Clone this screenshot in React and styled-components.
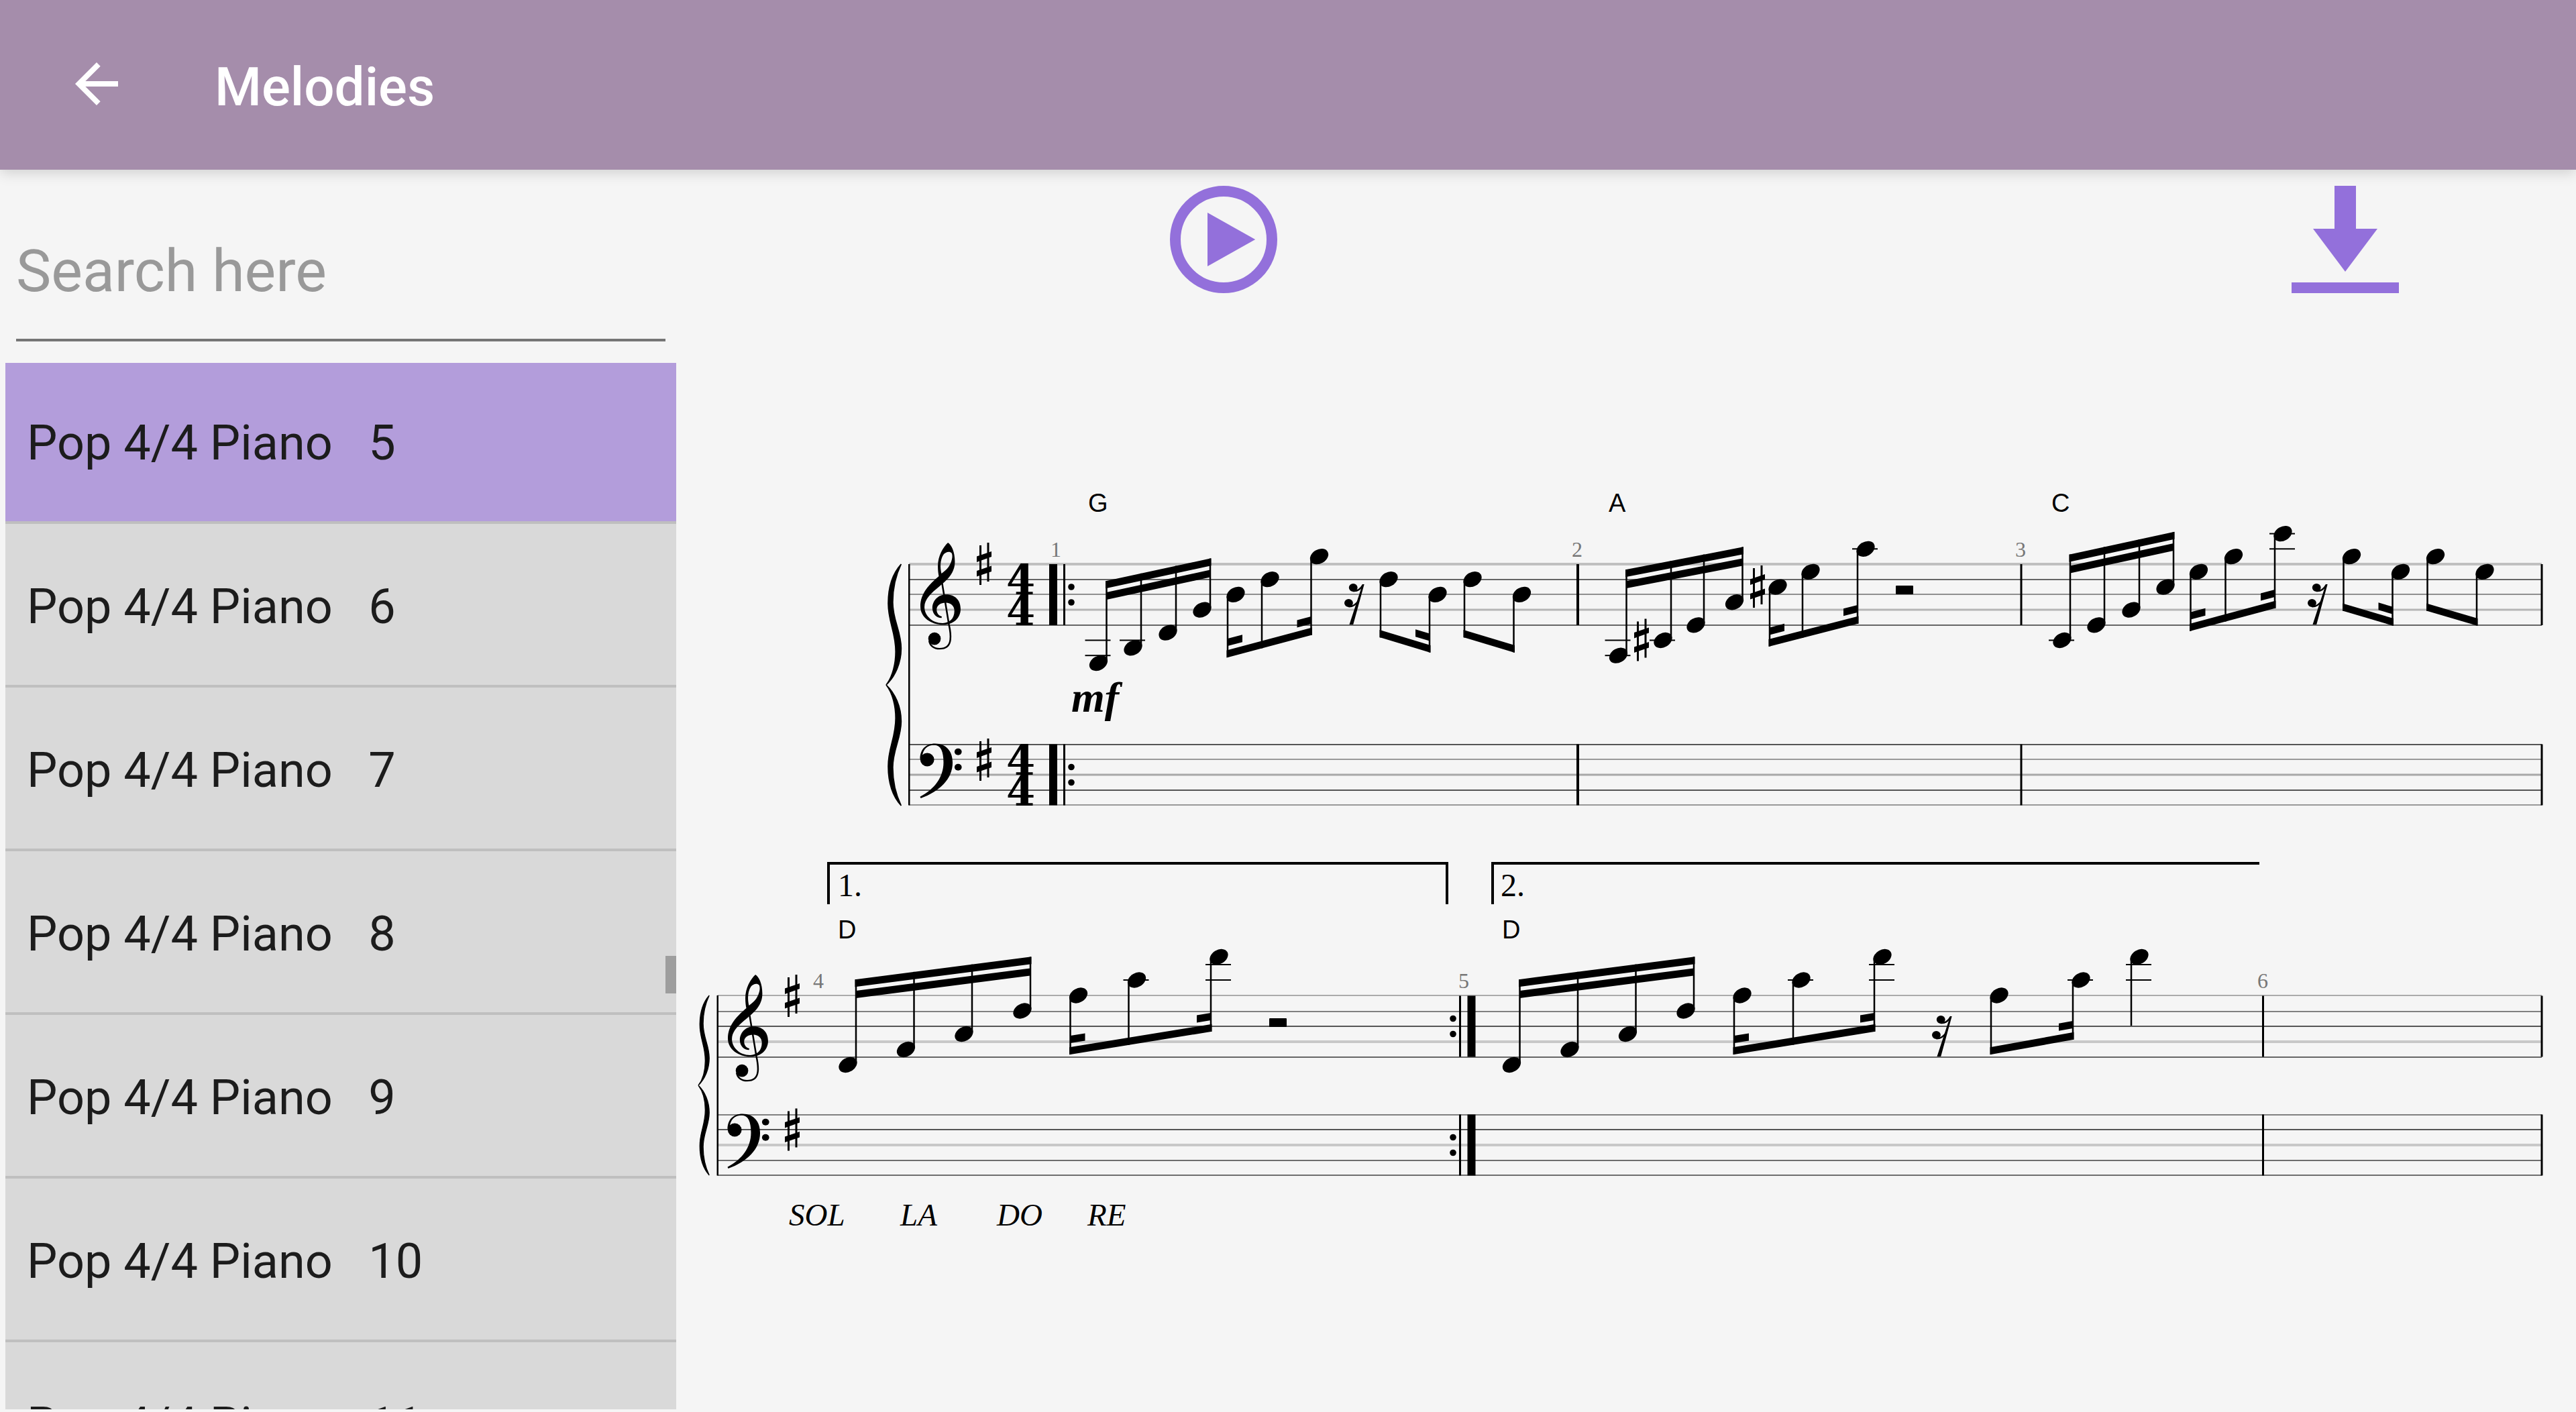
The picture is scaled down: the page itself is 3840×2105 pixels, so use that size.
import React, { useState } from "react";
import styled, { createGlobalStyle } from "styled-components";

const MELODIES = [5, 6, 7, 8, 9, 10, 11];

const TREBLE = 0;
const BASS = 1;

// beam: y of the outer edge at the first and the last stem
// stubs: short second beams, "start" after the first stem, "end" before the last
const SYSTEMS = [
  {
    left: 1355,
    right: 3789,
    top: 841,
    step: 11.35,
    brace: { x: 1321, width: 22, height: 360 },
    lines: [
      [841, 4, "#c0c0c0"],
      [864, 2, "#666"],
      [886, 2, "#8f8f8f"],
      [909, 3, "#b5b5b5"],
      [932, 2, "#666"],
      [1110, 2, "#555"],
      [1132, 2, "#999"],
      [1155, 3, "#a8a8a8"],
      [1178, 2, "#555"],
      [1200, 2, "#999"],
    ],
    staves: [841, 1109.5],
    clefs: [
      [TREBLE, 1372, 809],
      [BASS, 1371.5, 1108.5],
    ],
    sharps: [
      [1456, 809],
      [1456, 1101],
      [2436, 922.5],
      [2609, 843],
    ],
    bars: [
      [1570, 12],
      [1586.5, 3],
      [2352, 4],
      [3013, 3],
      [3789, 3],
    ],
    dots: 1597,
    numbers: [
      [1, 1566],
      [2, 2343],
      [3, 3004],
    ],
    chords: [
      ["G", 1622],
      ["A", 2398],
      ["C", 3058],
    ],
    groups: [
      { up: true, beam: [866, 832.5], double: true, notes: [[1637.5, 13], [1689, 11], [1741, 9], [1792, 6]] },
      { beam: [980, 947], stubs: ["start", "end"], notes: [[1842, 4], [1893, 2], [1966.5, -1]] },
      { beam: [950.5, 972.5], stubs: ["end"], notes: [[2070, 2], [2143, 4]] },
      { beam: [950.5, 972.5], notes: [[2195, 2], [2268.5, 4]] },
      { up: true, beam: [849, 815.5], double: true, notes: [[2412.5, 12], [2479, 10], [2528, 8], [2585.5, 5]] },
      { beam: [963.5, 930], stubs: ["start", "end"], notes: [[2650, 3], [2699, 1], [2781, -2]] },
      { up: true, beam: [826.5, 793], double: true, notes: [[3074, 10], [3125, 8], [3177, 6], [3228, 3]] },
      { beam: [940.5, 907], stubs: ["start", "end"], notes: [[3277.5, 1], [3329.5, -1], [3403, -4]] },
      { beam: [911, 932.5], stubs: ["end"], notes: [[3505.5, -1], [3578.5, 1]] },
      { beam: [911, 932.5], notes: [[3630.5, -1], [3704, 1]] },
    ],
    halfRests: [[2826, 873]],
    sixteenthRests: [
      [2004, 870],
      [3440, 870],
    ],
  },
  {
    left: 1069.5,
    right: 3789,
    top: 1484,
    step: 11.5,
    brace: { x: 1041, width: 16, height: 268 },
    lines: [
      [1484, 2, "#aaa"],
      [1508, 2, "#808080"],
      [1530, 2, "#555"],
      [1553, 4, "#c8c8c8"],
      [1576, 2, "#666"],
      [1662, 2, "#808080"],
      [1684, 2, "#555"],
      [1707, 4, "#c8c8c8"],
      [1730, 2, "#6e6e6e"],
      [1752, 2, "#6e6e6e"],
    ],
    staves: [1484.5, 1661.5],
    clefs: [
      [TREBLE, 1085, 1453],
      [BASS, 1084.5, 1660.5],
    ],
    sharps: [
      [1170, 1453],
      [1170, 1652.5],
    ],
    bars: [
      [2176.5, 3],
      [2193.5, 12],
      [3373.5, 3],
      [3789, 3],
    ],
    dots: 2166,
    numbers: [
      [4, 1212],
      [5, 2174],
      [6, 3365],
    ],
    chords: [
      ["D", 1249],
      ["D", 2239],
    ],
    groups: [
      { up: true, beam: [1460, 1426.5], double: true, notes: [[1264, 9], [1350.5, 7], [1437, 5], [1524, 2]] },
      { beam: [1572, 1538], stubs: ["start", "end"], notes: [[1607.5, 0], [1694.5, -2], [1817, -5]] },
      { up: true, beam: [1460, 1426.5], double: true, notes: [[2253.5, 9], [2340, 7], [2426.5, 5], [2513, 2]] },
      { beam: [1572, 1538], stubs: ["start", "end"], notes: [[2597, 0], [2685, -2], [2806, -5]] },
      { beam: [1572, 1550], stubs: ["end"], notes: [[2980, 0], [3102, -2]] },
      { single: true, beam: [1529, 1529], notes: [[3189, -5]] },
    ],
    halfRests: [[1892, 1518]],
    sixteenthRests: [[2880, 1514]],
  },
];

const SYLLABLES = [
  ["SOL", 1176],
  ["LA", 1342],
  ["DO", 1486],
  ["RE", 1621],
];

function TrebleClef({ x, y }) {
  return (
    <g transform={`translate(${x} ${y}) scale(.357 .333)`}>
      <path
        fillRule="evenodd"
        d="M115 0C95 20 73 60 73 105C73 125 75 138 77 150C40 184 0 225 0 285C0 335 45 367 95 367C140 367 168 335 168 297C168 258 145 232 108 232C72 232 50 262 50 292C50 320 68 337 88 337L90 331C76 326 68 315 68 300C68 280 85 269 106 269C128 269 142 285 142 305C142 340 122 360 93 360C48 360 17 325 17 288C17 252 46 225 80 195C115 165 144 135 144 85C144 40 130 10 115 0ZM88 138C82 110 82 78 96 54C104 42 122 36 130 46C138 60 130 90 118 108C108 122 98 130 88 138Z"
      />
      <path
        fill="none"
        stroke="#000"
        strokeWidth="7"
        d="M86 150L92 190L119 365C125 395 127 420 125 435C122 462 105 475 80 475C55 475 40 460 37 440"
      />
      <ellipse cx="59" cy="430" rx="26" ry="28" />
    </g>
  );
}

function BassClef({ x, y }) {
  return (
    <g transform={`translate(${x} ${y}) scale(.357 .333)`}>
      <path d="M0 70C0 25 25 0 62 0C110 0 136 35 136 85C136 160 80 215 3 245L0 238C60 205 98 150 98 85C98 35 86 7 60 7C30 7 12 25 9 60Z" />
      <ellipse cx="30" cy="72" rx="29" ry="30" />
      <circle cx="159" cy="37" r="15" />
      <circle cx="159" cy="106" r="15" />
    </g>
  );
}

function Sharp({ x, y }) {
  return (
    <g transform={`translate(${x} ${y})`}>
      <path d="M4 4h3v59h-3zM15.500 0h3v58h-3zM0 20.500L22 13v8L0 29zM0 42L22 34.500v8.500L0 50.500z" />
    </g>
  );
}

function SixteenthRest({ x, y }) {
  return (
    <g transform={`translate(${x} ${y}) scale(.357 .333)`}>
      <path d="M76 3L83 3L37 183L21 183Z" />
      <path fill="none" stroke="#000" strokeWidth="7" d="M36 33C54 36 68 24 79 4M18 103C36 104 48 94 60 76" />
      <circle cx="37" cy="18" r="18" />
      <circle cx="18" cy="87" r="18" />
    </g>
  );
}

function Brace({ x, y, width, height }) {
  const half =
    "M66 0C30 40 9 100 9 175C9 260 42 300 42 390C42 440 30 500 0 538C40 500 66 440 66 375C66 300 29 250 29 170C29 110 42 50 66 0Z";
  const sx = width / 65;
  const sy = height / 1076;
  return (
    <g stroke="#000" strokeWidth="5">
      <path d={half} transform={`translate(${x} ${y}) scale(${sx} ${sy})`} />
      <path d={half} transform={`translate(${x} ${y + height}) scale(${sx} ${-sy})`} />
    </g>
  );
}

function Beam({ x1, y1, x2, y2 }) {
  return <path d={`M${x1} ${y1}L${x2} ${y2}v11L${x1} ${y1 + 11}z`} />;
}

function NoteGroup({ group, top, step }) {
  const { notes, beam, up } = group;
  const stems = notes.map(([x]) => (up ? x + 12 : x - 12));
  const first = stems[0];
  const last = stems[stems.length - 1];
  const slope = last === first ? 0 : (beam[1] - beam[0]) / (last - first);
  const edge = (x) => beam[0] + (x - first) * slope;
  const inner = up ? 17 : -17;
  // the beam shape hangs down from its upper edge
  const shift = up ? 0 : -11;

  const beams = [];
  if (!group.single) {
    beams.push([first - 1.5, last + 1.5, shift]);
    if (group.double) beams.push([first, last, shift + inner]);
    if (group.stubs?.includes("start")) beams.push([first, first + 22, shift + inner]);
    if (group.stubs?.includes("end")) beams.push([last - 21, last, shift + inner]);
  }

  return (
    <g>
      {notes.map(([x, pos], i) => {
        const y = top + pos * step;
        const ledgers = [];
        for (let p = 10; p <= pos; p += 2) ledgers.push(p);
        for (let p = -2; p >= pos; p -= 2) ledgers.push(p);
        return (
          <g key={x}>
            {ledgers.map((p) => (
              <rect key={p} x={x - 20} y={top + p * step - 1} width="38" height="2" />
            ))}
            <ellipse rx="14.5" ry="10.5" transform={`translate(${x} ${y}) rotate(-30)`} />
            <line
              x1={stems[i]}
              x2={stems[i]}
              y1={up ? y - 3 : y + 3}
              y2={edge(stems[i])}
              stroke="#000"
              strokeWidth="2.5"
            />
          </g>
        );
      })}
      {beams.map(([x1, x2, dy]) => (
        <Beam key={`${x1}-${dy}`} x1={x1} y1={edge(x1) + dy} x2={x2} y2={edge(x2) + dy} />
      ))}
    </g>
  );
}

function System({ system }) {
  const { left, right, top, step, staves } = system;
  const bottom = staves[1] + 91;
  return (
    <g>
      {system.lines.map(([y, size, color]) => (
        <line key={y} x1={left} x2={right} y1={y} y2={y} stroke={color} strokeWidth={size} />
      ))}
      <Brace x={system.brace.x} y={top} width={system.brace.width} height={system.brace.height} />
      <rect x={left - 1} y={top} width="2.5" height={bottom - top} />
      {system.clefs.map(([kind, x, y]) =>
        kind === TREBLE ? <TrebleClef key={y} x={x} y={y} /> : <BassClef key={y} x={x} y={y} />
      )}
      {system.sharps.map(([x, y]) => (
        <Sharp key={`${x}-${y}`} x={x} y={y} />
      ))}
      {staves.map((y) => (
        <g key={y}>
          {system.bars.map(([x, size]) => (
            <rect key={x} x={x - size / 2} y={y} width={size} height="91" />
          ))}
          <circle cx={system.dots} cy={y + 34} r="4.8" />
          <circle cx={system.dots} cy={y + 57} r="4.8" />
        </g>
      ))}
      {system.groups.map((group) => (
        <NoteGroup key={group.notes[0][0]} group={group} top={top} step={step} />
      ))}
      {system.halfRests.map(([x, y]) => (
        <rect key={x} x={x} y={y} width="26" height="13" rx="1" />
      ))}
      {system.sixteenthRests.map(([x, y]) => (
        <SixteenthRest key={x} x={x} y={y} />
      ))}
      {system.numbers.map(([n, x]) => (
        <MeasureNumber key={n} x={x} y={top - 11}>
          {n}
        </MeasureNumber>
      ))}
    </g>
  );
}

function SheetMusic() {
  const [first, second] = SYSTEMS;
  return (
    <Sheet viewBox="1016 453 2824 1500" role="img" aria-label="Piano score">
      <System system={first} />
      {first.staves.map((y) => (
        <g key={y}>
          <TimeDigit x="1500" y={y + 45}>4</TimeDigit>
          <TimeDigit x="1500" y={y + 91}>4</TimeDigit>
        </g>
      ))}
      {first.chords.map(([name, x]) => (
        <ChordName key={x} x={x} y="763">{name}</ChordName>
      ))}
      <Dynamic x="1597" y="1061">mf</Dynamic>

      <System system={second} />
      <Ending d="M1235 1348V1287H2157V1348" />
      <EndingNumber x="1249" y="1336">1.</EndingNumber>
      <Ending d="M2225 1348V1287H3368" />
      <EndingNumber x="2237" y="1336">2.</EndingNumber>
      {second.chords.map(([name, x]) => (
        <ChordName key={x} x={x} y="1399">{name}</ChordName>
      ))}
      {SYLLABLES.map(([name, x]) => (
        <Syllable key={name} x={x} y="1827">{name}</Syllable>
      ))}
    </Sheet>
  );
}

function App() {
  const [selected, setSelected] = useState(5);
  const [query, setQuery] = useState("");

  return (
    <Page>
      <GlobalStyle />
      <Header>
        <BackButton aria-label="Back">
          <svg viewBox="0 0 24 24" fill="currentColor">
            <path d="M20 11H7.830l5.590-5.590L12 4l-8 8 8 8 1.410-1.410L7.830 13H20v-2z" />
          </svg>
        </BackButton>
        <Title>Melodies</Title>
      </Header>
      <Content>
        <Sidebar>
          <SearchInput
            type="text"
            aria-label="Search melodies"
            placeholder="Search here"
            value={query}
            onChange={(e) => setQuery(e.target.value)}
          />
          <ListFrame>
            <MelodyList>
              {MELODIES.map((n) => (
                <li key={n}>
                  <MelodyButton $selected={n === selected} onClick={() => setSelected(n)}>
                    {`Pop 4/4 Piano   ${n}`}
                  </MelodyButton>
                </li>
              ))}
            </MelodyList>
            <ScrollThumb />
          </ListFrame>
        </Sidebar>
        <Viewer>
          <Actions>
            <ActionButton aria-label="Play">
              <svg viewBox="0 0 24 24" fill="currentColor">
                <circle cx="12" cy="12" r="9" fill="none" stroke="currentColor" strokeWidth="2" />
                <path d="M9 7v10l8.900-5z" />
              </svg>
            </ActionButton>
            <ActionButton aria-label="Download">
              <svg viewBox="0 0 24 24" fill="currentColor">
                <path d="M10 2h4v8h4l-6 8-6-8h4zM2 20h20v2H2z" />
              </svg>
            </ActionButton>
          </Actions>
          <SheetMusic />
        </Viewer>
      </Content>
    </Page>
  );
}

export default App;

const GlobalStyle = createGlobalStyle`
  * {
    box-sizing: border-box;
  }
  body {
    margin: 0;
    background: #f5f5f5;
    font-family: Roboto, sans-serif;
  }
  button, input {
    font-family: inherit;
    border: none;
    border-radius: 0;
    background: none;
  }
`;
const Page = styled.div`
  display: flex;
  flex-direction: column;
  height: 100vh;
  overflow: hidden;
`;
const Header = styled.header`
  display: flex;
  align-items: center;
  gap: 128px;
  flex: none;
  height: 253px;
  padding: 0 96px 4px;
  background: #a58dab;
  color: #fff;
  box-shadow: 0 4px 20px rgba(0, 0, 0, 0.16);
  z-index: 1;
`;
const BackButton = styled.button`
  width: 96px;
  height: 96px;
  padding: 0;
  color: inherit;
  svg {
    display: block;
  }
`;
const Title = styled.h1`
  margin: 0;
  padding-top: 10px;
  font-size: 80px;
  line-height: 96px;
  font-weight: 500;
`;
const Content = styled.main`
  display: flex;
  flex: 1;
  min-height: 0;
`;
const Sidebar = styled.aside`
  display: flex;
  flex-direction: column;
  flex: none;
  width: 1016px;
  padding: 48px 8px 4px;
`;
const SearchInput = styled.input`
  flex: none;
  height: 208px;
  margin: 0 16px 32px;
  padding: 0;
  border-bottom: 4px solid #757575;
  outline: none;
  font-size: 88px;
  color: #1c1c1c;
  &::placeholder {
    color: #999;
    opacity: 1;
  }
`;
const ListFrame = styled.div`
  position: relative;
  flex: 1;
  min-height: 0;
  overflow: hidden;
`;
const MelodyList = styled.ul`
  margin: -4px 0 0;
  padding: 0;
  list-style: none;
  background: #d9d9d9;
  li {
    border-bottom: 4px solid #bfbfbf;
  }
`;
const MelodyButton = styled.button`
  display: block;
  width: 100%;
  height: 240px;
  padding: 6px 32px 0;
  background: ${({ $selected }) => ($selected ? "#b39ddb" : "#d9d9d9")};
  color: #1c1c1c;
  font-size: 72px;
  text-align: left;
  white-space: pre;
`;
const ScrollThumb = styled.div`
  position: absolute;
  right: 0;
  top: 884px;
  width: 16px;
  height: 56px;
  background: #9e9e9e;
`;
const Viewer = styled.section`
  flex: 1;
  min-width: 0;
`;
const Actions = styled.div`
  display: flex;
  justify-content: space-between;
  padding: 8px 248px 0 712px;
`;
const ActionButton = styled.button`
  width: 192px;
  height: 192px;
  padding: 0;
  color: #9370db;
  svg {
    display: block;
  }
`;
const Sheet = styled.svg`
  display: block;
  width: 100%;
  height: auto;
`;
const MeasureNumber = styled.text`
  font-family: "Liberation Serif", serif;
  font-size: 32px;
  fill: #777;
`;
const ChordName = styled.text`
  font-family: "Liberation Sans", sans-serif;
  font-size: 38px;
`;
const TimeDigit = styled.text`
  font-family: "DejaVu Serif", serif;
  font-size: 62px;
  font-weight: 700;
`;
const Dynamic = styled.text`
  font-family: "Liberation Serif", serif;
  font-size: 64px;
  font-weight: 700;
  font-style: italic;
`;
const Ending = styled.path`
  fill: none;
  stroke: #000;
  stroke-width: 4px;
`;
const EndingNumber = styled.text`
  font-family: "Liberation Serif", serif;
  font-size: 48px;
`;
const Syllable = styled.text`
  font-family: "Liberation Serif", serif;
  font-size: 47px;
  font-style: italic;
`;
